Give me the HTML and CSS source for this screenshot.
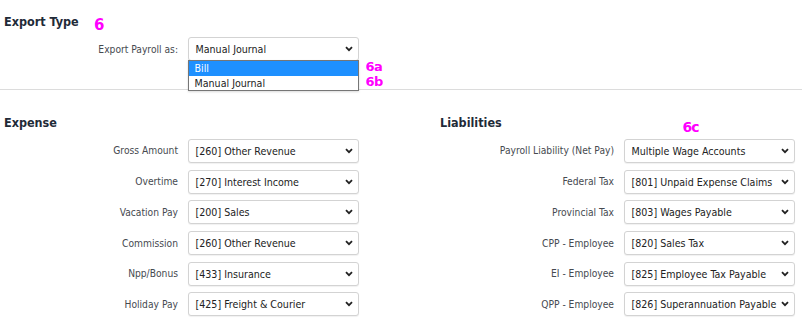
FILE: index.html
```html
<!DOCTYPE html>
<html lang="en">
<head>
<meta charset="utf-8">
<title>Export Type</title>
<link rel="stylesheet" href="styles.css">
</head>
<body>
<div class="page">
  <section class="export">
    <h2 class="heading">Export Type</h2>
    <div class="field">
      <span class="label">Export Payroll as:</span>
      <div class="select-wrap">
        <div class="select"><span>Manual Journal</span><svg class="chev" width="8" height="6" viewBox="0 0 8 6"><polyline points="1,1.2 4,4.2 7,1.2" fill="none" stroke="#222" stroke-width="1.8"/></svg></div>
        <ul class="listbox">
          <li class="option option-active">Bill</li>
          <li class="option">Manual Journal</li>
        </ul>
      </div>
    </div>
  </section>
  <hr class="divider">
  <div class="columns">
    <section class="col">
      <h2 class="heading">Expense</h2>
      <div class="rows">
        <div class="field"><span class="label">Gross Amount</span><div class="select"><span>[260] Other Revenue</span><svg class="chev" width="8" height="6" viewBox="0 0 8 6"><polyline points="1,1.2 4,4.2 7,1.2" fill="none" stroke="#222" stroke-width="1.8"/></svg></div></div>
        <div class="field"><span class="label">Overtime</span><div class="select"><span>[270] Interest Income</span><svg class="chev" width="8" height="6" viewBox="0 0 8 6"><polyline points="1,1.2 4,4.2 7,1.2" fill="none" stroke="#222" stroke-width="1.8"/></svg></div></div>
        <div class="field"><span class="label">Vacation Pay</span><div class="select"><span>[200] Sales</span><svg class="chev" width="8" height="6" viewBox="0 0 8 6"><polyline points="1,1.2 4,4.2 7,1.2" fill="none" stroke="#222" stroke-width="1.8"/></svg></div></div>
        <div class="field"><span class="label">Commission</span><div class="select"><span>[260] Other Revenue</span><svg class="chev" width="8" height="6" viewBox="0 0 8 6"><polyline points="1,1.2 4,4.2 7,1.2" fill="none" stroke="#222" stroke-width="1.8"/></svg></div></div>
        <div class="field"><span class="label">Npp/Bonus</span><div class="select"><span>[433] Insurance</span><svg class="chev" width="8" height="6" viewBox="0 0 8 6"><polyline points="1,1.2 4,4.2 7,1.2" fill="none" stroke="#222" stroke-width="1.8"/></svg></div></div>
        <div class="field"><span class="label">Holiday Pay</span><div class="select"><span>[425] Freight &amp; Courier</span><svg class="chev" width="8" height="6" viewBox="0 0 8 6"><polyline points="1,1.2 4,4.2 7,1.2" fill="none" stroke="#222" stroke-width="1.8"/></svg></div></div>
      </div>
    </section>
    <section class="col">
      <h2 class="heading">Liabilities</h2>
      <div class="rows">
        <div class="field"><span class="label">Payroll Liability (Net Pay)</span><div class="select"><span>Multiple Wage Accounts</span><svg class="chev" width="8" height="6" viewBox="0 0 8 6"><polyline points="1,1.2 4,4.2 7,1.2" fill="none" stroke="#222" stroke-width="1.8"/></svg></div></div>
        <div class="field"><span class="label">Federal Tax</span><div class="select"><span>[801] Unpaid Expense Claims</span><svg class="chev" width="8" height="6" viewBox="0 0 8 6"><polyline points="1,1.2 4,4.2 7,1.2" fill="none" stroke="#222" stroke-width="1.8"/></svg></div></div>
        <div class="field"><span class="label">Provincial Tax</span><div class="select"><span>[803] Wages Payable</span><svg class="chev" width="8" height="6" viewBox="0 0 8 6"><polyline points="1,1.2 4,4.2 7,1.2" fill="none" stroke="#222" stroke-width="1.8"/></svg></div></div>
        <div class="field"><span class="label">CPP - Employee</span><div class="select"><span>[820] Sales Tax</span><svg class="chev" width="8" height="6" viewBox="0 0 8 6"><polyline points="1,1.2 4,4.2 7,1.2" fill="none" stroke="#222" stroke-width="1.8"/></svg></div></div>
        <div class="field"><span class="label">EI - Employee</span><div class="select"><span>[825] Employee Tax Payable</span><svg class="chev" width="8" height="6" viewBox="0 0 8 6"><polyline points="1,1.2 4,4.2 7,1.2" fill="none" stroke="#222" stroke-width="1.8"/></svg></div></div>
        <div class="field"><span class="label">QPP - Employee</span><div class="select"><span>[826] Superannuation Payable</span><svg class="chev" width="8" height="6" viewBox="0 0 8 6"><polyline points="1,1.2 4,4.2 7,1.2" fill="none" stroke="#222" stroke-width="1.8"/></svg></div></div>
      </div>
    </section>
  </div>
  <span class="note note-6">6</span>
  <span class="note note-6ab">6a<br>6b</span>
  <span class="note note-6c">6c</span>
</div>
</body>
</html>
```

FILE: styles.css
```css
* { box-sizing: border-box; }
html, body { margin: 0; padding: 0; background: #fff; }
body {
  font-family: "DejaVu Sans Condensed", "DejaVu Sans", sans-serif;
  font-size: 10.2px;
  color: #464a50;
}
.page {
  position: relative;
  width: 802px;
  height: 323px;
  padding-top: 14px;
  overflow: hidden;
}
.heading {
  margin: 0;
  padding-left: 4px;
  font-size: 12.5px;
  line-height: 16px;
  font-weight: bold;
  color: #1f2b38;
}
.field {
  display: flex;
  align-items: center;
  gap: 9.5px;
  height: 24px;
}
.export .field { margin-top: 7px; }
.label {
  width: 178px;
  flex: none;
  text-align: right;
  white-space: nowrap;
}
.select-wrap { position: relative; }
.select {
  width: 171px;
  height: 24px;
  flex: none;
  display: flex;
  align-items: center;
  justify-content: space-between;
  padding: 0 5px 0 7px;
  border: 1px solid #d3d3d3;
  border-radius: 3px;
  background: #fff;
  box-shadow: 0 1px 1px rgba(0,0,0,0.06);
  color: #222;
  font-size: 10.6px;
  white-space: nowrap;
}
.chev { flex: none; display: block; }
.listbox {
  position: absolute;
  left: 0;
  top: 23px;
  width: 171px;
  margin: 0;
  padding: 0;
  list-style: none;
  border: 1px solid #767676;
  background: #fff;
  box-shadow: 0 1px 2px rgba(0,0,0,0.15);
  z-index: 2;
}
.option {
  height: 14.5px;
  line-height: 14.5px;
  padding-left: 6px;
  font-size: 10.6px;
  color: #222;
}
.option-active { background: #1e90ff; color: #fff; }
.divider {
  margin: 28px 0 0;
  border: 0;
  border-top: 1px solid #dcdcdc;
  height: 0;
}
.columns {
  display: grid;
  grid-template-columns: 436px 1fr;
  margin-top: 24.7px;
}
.rows {
  display: flex;
  flex-direction: column;
  gap: 6.7px;
  margin-top: 8.3px;
}
.note {
  position: absolute;
  font-family: "DejaVu Sans", sans-serif;
  font-weight: bold;
  color: #ff00ff;
  font-size: 14px;
  line-height: 12px;
  letter-spacing: -1px;
}
.note-6 { left: 94px; top: 18.3px; font-size: 15px; line-height: 15px; letter-spacing: 0; }
.note-6ab { left: 365.5px; top: 59.2px; font-size: 13px; line-height: 15.2px; letter-spacing: -0.6px; }
.note-6c { left: 682.5px; top: 121.4px; }
```
